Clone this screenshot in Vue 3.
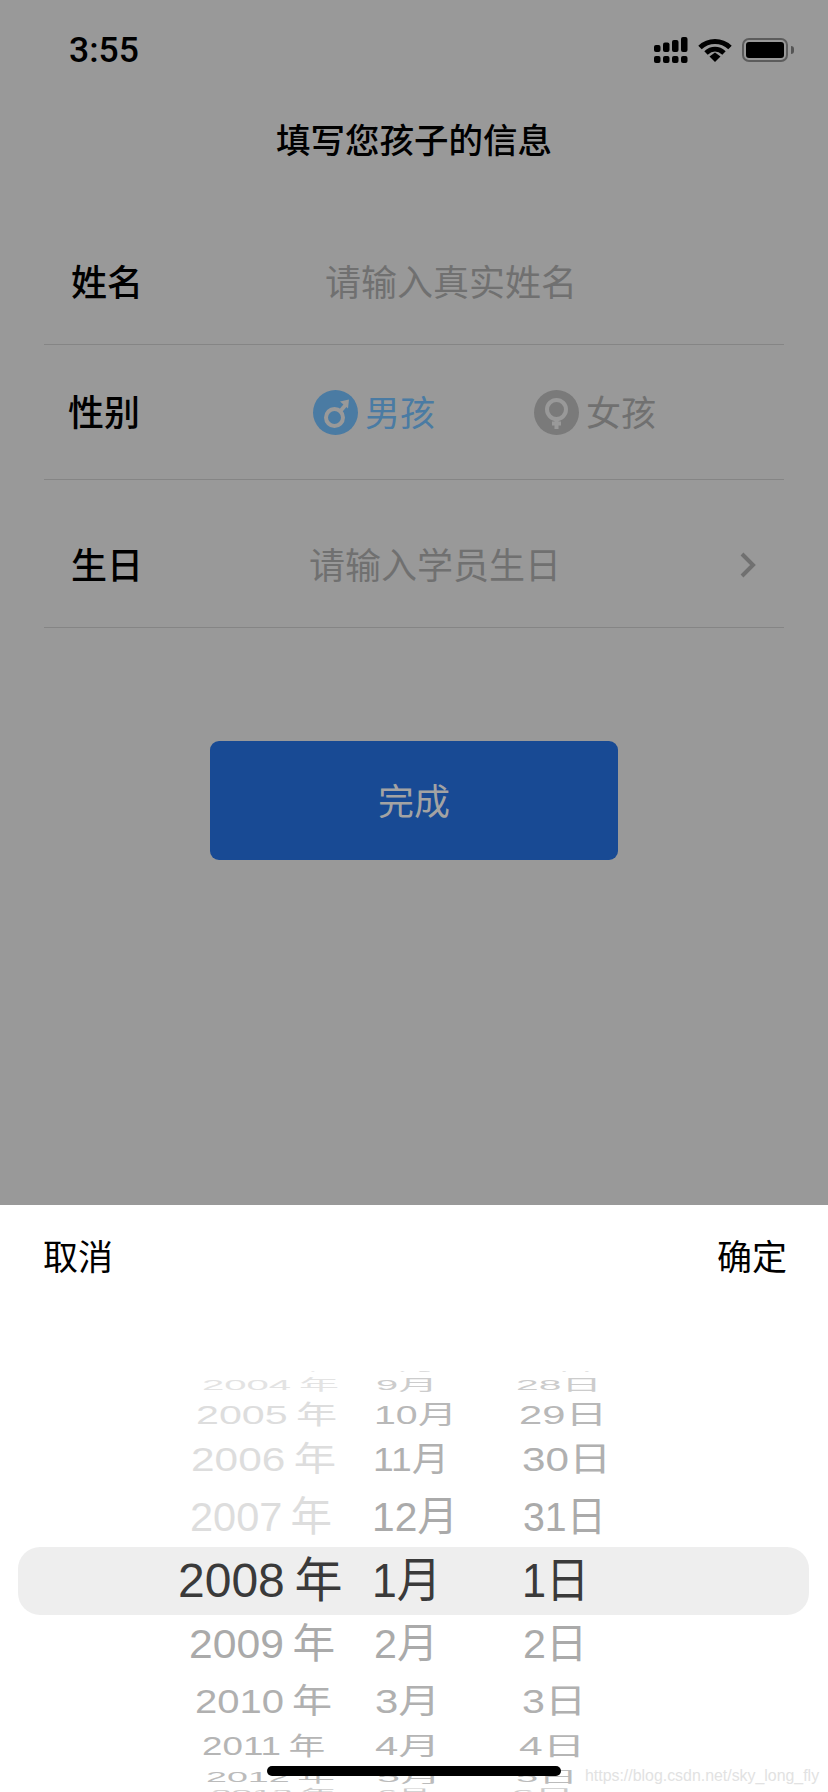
<template>
  <div class="page">
    <div class="status-bar">
      <span class="time">3:55</span>
      <div class="status-icons">
        <svg width="34" height="26" viewBox="0 0 34 26">
          <rect x="0" y="8" width="6.5" height="7" rx="2" />
          <rect x="9" y="5.5" width="6.5" height="9.5" rx="2" />
          <rect x="18" y="3" width="6.5" height="12" rx="2" />
          <rect x="27" y="0" width="6.5" height="15" rx="2" />
          <rect x="0" y="19" width="6.5" height="7" rx="2" />
          <rect x="9" y="19" width="6.5" height="7" rx="2" />
          <rect x="18" y="19" width="6.5" height="7" rx="2" />
          <rect x="27" y="19" width="6.5" height="7" rx="2" />
        </svg>
        <svg class="wifi" width="34" height="24" viewBox="0 0 34 24">
          <path d="M2 9.5 C10.500 1.500 23.500 1.500 32 9.500" />
          <path d="M8 15 C13.500 10 20.500 10 26 15" />
          <polygon points="11.500,18.500 17,14.500 22.500,18.500 17,24" class="wifi-dot" />
        </svg>
        <div class="battery">
          <div class="battery-fill"></div>
        </div>
        <div class="battery-cap"></div>
      </div>
    </div>

    <h1 class="title">填写您孩子的信息</h1>

    <div class="form">
      <div class="row row-name">
        <span class="label">姓名</span>
        <span class="placeholder name-value">请输入真实姓名</span>
      </div>
      <div class="row row-gender">
        <span class="label gender-label">性别</span>
        <div class="gender male">
          <svg width="45" height="45" viewBox="0 0 45 45">
            <circle cx="22.500" cy="22.500" r="22.500" fill="#4a7ba3" />
            <g stroke="#999" stroke-width="4" fill="none">
              <circle cx="21.500" cy="27.500" r="8.500" />
              <path d="M27 21.500 L33 14.500" />
            </g>
            <polygon points="27,11.500 36,9.500 35,18.500" fill="#999" />
          </svg>
          <span>男孩</span>
        </div>
        <div class="gender female">
          <svg width="45" height="45" viewBox="0 0 45 45">
            <circle cx="22.500" cy="22.500" r="22.500" fill="#7a7a7a" />
            <g stroke="#999" stroke-width="4" fill="none">
              <circle cx="22.500" cy="19.500" r="9.500" />
              <path d="M22.500 29 V39 M18 33.500 H27" />
            </g>
          </svg>
          <span>女孩</span>
        </div>
      </div>
      <div class="row row-birthday">
        <span class="label">生日</span>
        <span class="placeholder birthday-value">请输入学员生日</span>
        <svg class="chevron" width="17" height="26" viewBox="0 0 17 26">
          <path d="M3 2 L14 13 L3 24" />
        </svg>
      </div>
    </div>

    <button class="done">完成</button>

    <div class="sheet">
      <div class="sheet-actions">
        <span>取消</span>
        <span>确定</span>
      </div>
      <div class="picker">
        <div class="picker-band"></div>
        <div
          v-for="row in rows"
          :key="row.cells[0].text"
          class="picker-row"
          :style="{ height: row.height + 'px' }"
        >
          <span
            v-for="cell in row.cells"
            :key="cell.text"
            class="picker-cell"
            :style="cell.style"
          >{{ cell.text }}</span>
        </div>
      </div>
      <div class="home-indicator"></div>
      <span class="watermark">https://blog.csdn.net/sky_long_fly</span>
    </div>
  </div>
</template>

<script setup>
const FONT = 48
const PICKER_TOP = 1371
const PAGE_BOTTOM = 1792
const COLUMNS = [170, 365, 510]

// centre y, glyph height, colours, then [text, left x, width] for each wheel
const wheel = [
  [1366, 12, ['#e8e8e8', '#ddd', '#ddd'], ['2003\u2009年', 208, 119], ['8月', 378, 55], ['27日', 512, 79]],
  [1385, 14, ['#e3e3e3', '#ccc', '#ccc'], ['2004\u2009年', 202, 135], ['9月', 376, 58], ['28日', 516, 82]],
  [1415, 24, ['#ddd', '#b8b8b8', '#b8b8b8'], ['2005\u2009年', 196, 139], ['10月', 374, 79], ['29日', 519, 84]],
  [1460, 31, ['#ddd', '#b0b0b0', '#b0b0b0'], ['2006\u2009年', 191, 143], ['11月', 373, 75], ['30日', 522, 85]],
  [1518, 37, ['#ddd', '#aaa', '#aaa'], ['2007\u2009年', 190, 140], ['12月', 372, 82], ['31日', 523, 79]],
  [1581, 44, ['#3a3a3a', '#3a3a3a', '#3a3a3a'], ['2008\u2009年', 178, 162], ['1月', 372, 65], ['1日', 522, 63]],
  [1645, 37, ['#aaa', '#aaa', '#aaa'], ['2009\u2009年', 189, 144], ['2月', 374, 60], ['2日', 523, 60]],
  [1701, 31, ['#b0b0b0', '#b0b0b0', '#b0b0b0'], ['2010\u2009年', 195, 135], ['3月', 375, 61], ['3日', 522, 60]],
  [1747, 23, ['#b5b5b5', '#b5b5b5', '#b5b5b5'], ['2011\u2009年', 202, 124], ['4月', 375, 61], ['4日', 519, 62]],
  [1777, 13, ['#bbb', '#bbb', '#bbb'], ['2012\u2009年', 206, 127], ['5月', 377, 60], ['5日', 516, 58]],
  [1793, 8, ['#ccc', '#ccc', '#ccc'], ['2013\u2009年', 211, 124], ['6月', 378, 50], ['6日', 512, 58]]
]

// visible width of "2008 年" at FONT, side bearings left out
function naturalWidth(text) {
  const digits = text.replace(/\D/g, '').length
  const gap = text.includes('\u2009') ? 0.25 : 0
  return (digits * 0.556 + gap + 0.9) * FONT
}

const rows = wheel.map((item, i) => {
  const [cy, glyphHeight, colors, ...cells] = item
  const top = i === 0 ? PICKER_TOP : (wheel[i - 1][0] + cy) / 2
  const bottom = i === wheel.length - 1 ? PAGE_BOTTOM : (cy + wheel[i + 1][0]) / 2
  const dy = cy - (top + bottom) / 2
  const sy = glyphHeight / 44
  return {
    height: bottom - top,
    cells: cells.map(([text, x, w], c) => ({
      text,
      style: {
        color: colors[c],
        marginLeft: x - COLUMNS[c] + 'px',
        transform: `translateY(${dy}px) scale(${w / naturalWidth(text)}, ${sy})`
      }
    }))
  }
})
</script>

<style>
body {
  background: #999;
}
</style>

<style scoped>
.page {
  position: relative;
  width: 828px;
  height: 1792px;
  overflow: hidden;
  display: flex;
  flex-direction: column;
  background-color: #999;
  color: #000;
  font-family: "Noto Sans CJK SC", sans-serif;
}

.status-bar {
  display: flex;
  justify-content: space-between;
  align-items: center;
  height: 100px;
  padding: 0 34px 0 69px;
}
.time {
  font-family: Roboto, sans-serif;
  font-size: 35.5px;
  font-weight: 500;
}
.status-icons {
  display: flex;
  align-items: center;
  gap: 10px;
}
.status-icons svg {
  display: block;
}
.wifi path {
  fill: none;
  stroke: #000;
  stroke-width: 5;
}
.wifi-dot {
  fill: #000;
}
.battery {
  width: 46px;
  height: 24px;
  margin-right: -7px;
  padding: 2px;
  box-sizing: border-box;
  border: 2px solid #5c5c5c;
  border-radius: 7px;
}
.battery-fill {
  height: 100%;
  background-color: #000;
  border-radius: 3px;
}
.battery-cap {
  width: 3px;
  height: 8px;
  background-color: #555;
  border-radius: 0 3px 3px 0;
}

.title {
  margin: 0;
  height: 76px;
  line-height: 76px;
  font-size: 34.5px;
  font-weight: 500;
  text-align: center;
}

.form {
  margin: 44px 44px 0;
}
.row {
  display: flex;
  align-items: center;
  padding-left: 27px;
  border-bottom: 1px solid #858585;
  font-size: 36px;
  box-sizing: border-box;
}
.row-name {
  height: 125px;
}
.row-gender {
  height: 135px;
}
.row-birthday {
  height: 148px;
  padding-top: 22px;
  padding-right: 29px;
}
.label {
  width: 72px;
  flex-shrink: 0;
  font-weight: 500;
}
.gender-label {
  margin-left: -3px;
  margin-right: 3px;
}
.label,
.placeholder,
.gender span {
  margin-top: -4px;
}
.placeholder {
  color: #707070;
}
.name-value {
  margin-left: 182px;
}
.birthday-value {
  margin-left: 166px;
}
.gender {
  display: flex;
  align-items: center;
  gap: 7px;
  color: #707070;
}
.gender span {
  font-size: 35px;
}
.gender svg {
  display: block;
}
.male {
  margin-left: 170px;
  color: #4a7ba3;
}
.female {
  margin-left: 99px;
}
.chevron {
  margin-left: auto;
  margin-right: -1px;
}
.chevron path {
  fill: none;
  stroke: #707070;
  stroke-width: 4;
}

.done {
  align-self: center;
  width: 408px;
  height: 119px;
  margin-top: 113px;
  padding: 0 0 4px;
  border: none;
  border-radius: 9px;
  background-color: #184a94;
  color: #a3a3a3;
  font-family: inherit;
  font-size: 36px;
}

.sheet {
  position: absolute;
  left: 0;
  right: 0;
  top: 1205px;
  bottom: 0;
  background-color: #fff;
}
.sheet-actions {
  display: flex;
  justify-content: space-between;
  height: 166px;
  padding: 24px 41px 0 43px;
  box-sizing: border-box;
  font-size: 35px;
  line-height: 52px;
}
.picker {
  position: relative;
  height: 421px;
  overflow: hidden;
  font-family: "Liberation Sans", "Noto Sans CJK SC", sans-serif;
}
.picker-band {
  position: absolute;
  left: 18px;
  width: 791px;
  top: 176px;
  height: 68px;
  background-color: #eee;
  border-radius: 22px;
}
.picker-row {
  position: relative;
  display: grid;
  grid-template-columns: 195px 145px 150px;
  grid-template-rows: 100%;
  align-items: center;
  padding-left: 170px;
}
.picker-cell {
  display: block;
  width: max-content;
  height: 48px;
  line-height: 48px;
  font-size: 48px;
  white-space: nowrap;
  transform-origin: left center;
}
.home-indicator {
  position: absolute;
  left: 267px;
  top: 561px;
  width: 294px;
  height: 10px;
  background-color: #000;
  border-radius: 5px;
}
.watermark {
  position: absolute;
  left: 585px;
  top: 562px;
  font-family: "Liberation Sans", sans-serif;
  font-size: 15.9px;
  line-height: 18px;
  color: #e2e2e2;
  white-space: nowrap;
}
</style>
